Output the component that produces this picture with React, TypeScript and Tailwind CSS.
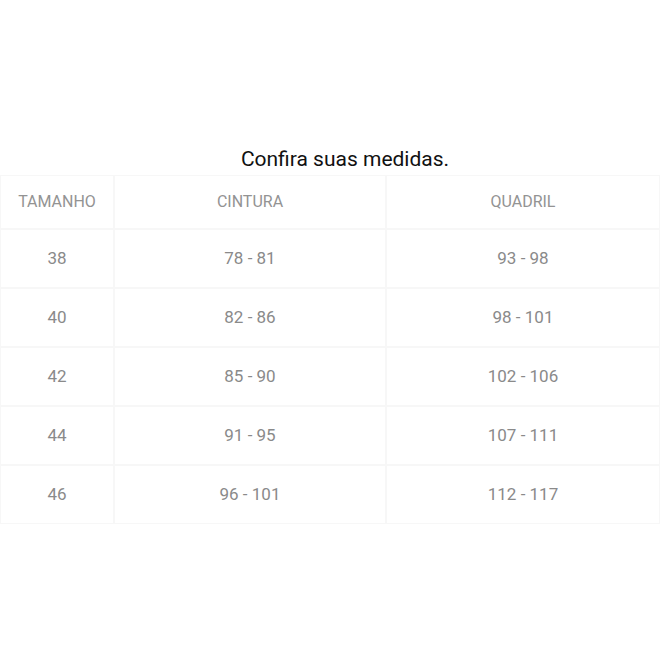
const rows = [
  ['38', '78 - 81', '93 - 98'],
  ['40', '82 - 86', '98 - 101'],
  ['42', '85 - 90', '102 - 106'],
  ['44', '91 - 95', '107 - 111'],
  ['46', '96 - 101', '112 - 117'],
];

export default function App() {
  return (
    <div className="w-[660px] h-[660px] bg-white font-['Roboto',sans-serif] pt-[145px]">
      <h2 className="text-center text-[21px] leading-[28px] text-[#111] pl-[30px]">Confira suas medidas.</h2>
      <div className="grid grid-cols-[114px_272px_1fr] mt-[2px] text-[17px] text-[#8a8a8a]">
        {['TAMANHO', 'CINTURA', 'QUADRIL'].map((h) => (
          <div key={h} className="h-[54px] flex items-center justify-center border border-[#f7f7f7] text-[16px] text-[#939393]">
            {h}
          </div>
        ))}
        {rows.map((r) =>
          r.map((c, i) => (
            <div key={r[0] + i} className="h-[59px] flex items-center justify-center border border-[#f7f7f7]">
              {c}
            </div>
          ))
        )}
      </div>
    </div>
  );
}
